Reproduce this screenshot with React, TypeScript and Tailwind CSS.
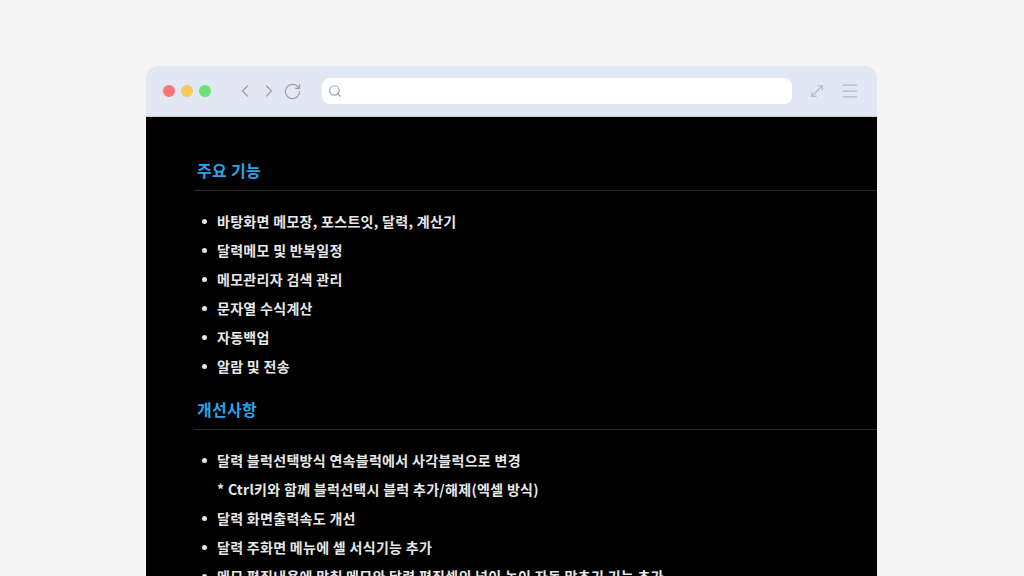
import { ChevronLeft, ChevronRight, RotateCw, Search, MoveDiagonal, Menu } from 'lucide-react';

const features = ['바탕화면 메모장, 포스트잇, 달력, 계산기', '달력메모 및 반복일정', '메모관리자 검색 관리', '문자열 수식계산', '자동백업', '알람 및 전송'];

function Bullet({ children, plain }: { children: React.ReactNode; plain?: boolean }) {
    return (
        <li className="flex items-center h-[29px]">
            <span className="w-[20px] shrink-0 flex justify-start pl-[5px]">
                {!plain && <span className="w-[5px] h-[5px] rounded-full bg-gray-200" />}
            </span>
            <span>{children}</span>
        </li>
    );
}

export default function App() {
    return (
        <div className="w-[1024px] h-[576px] bg-[#f5f5f5] overflow-hidden pt-[66px] pl-[146px]" style={{ fontFamily: '"Noto Sans CJK KR", "Noto Sans", sans-serif' }}>
            <div className="w-[731px] h-[600px] rounded-t-[12px] overflow-hidden flex flex-col">
                {/* Toolbar */}
                <div className="h-[51px] bg-[#e2e8f3] flex items-center px-[17px] border-b border-[#c9ccd3]">
                    <div className="flex gap-[6px]">
                        <span className="w-[12px] h-[12px] rounded-full bg-[#fb7476]" />
                        <span className="w-[12px] h-[12px] rounded-full bg-[#fdc85a]" />
                        <span className="w-[12px] h-[12px] rounded-full bg-[#6be277]" />
                    </div>
                    <div className="flex items-center gap-[4px] ml-[24px] text-[#9aa0ab]">
                        <ChevronLeft className="w-[20px] h-[20px]" strokeWidth={1.5} />
                        <ChevronRight className="w-[20px] h-[20px]" strokeWidth={1.5} />
                        <RotateCw className="w-[19px] h-[19px]" strokeWidth={1.5} />
                    </div>
                    <div className="ml-[20px] w-[470px] h-[26px] bg-white rounded-[8px] flex items-center px-[6px] text-[#9aa0ab]">
                        <Search className="w-[14px] h-[14px]" strokeWidth={2} />
                    </div>
                    <div className="ml-auto flex items-center gap-[14px] text-[#b3b8c2]">
                        <MoveDiagonal className="w-[18px] h-[18px]" strokeWidth={1.5} />
                        <Menu className="w-[20px] h-[20px]" strokeWidth={1.5} />
                    </div>
                </div>
                {/* Content */}
                <div className="flex-1 bg-black pl-[48px] pt-[40px] text-[14px] font-bold text-[#e8e8e8] tracking-[0.3px]">
                    <h2 className="text-[#2aa6e6] text-[16px] font-bold pl-[3px] h-[26px] leading-[26px]">주요 기능</h2>
                    <div className="border-b border-[#2a2a2a] mt-[7px]" />
                    <ul className="mt-[16px] pl-[3px]">
                        {features.map(f => <Bullet key={f}>{f}</Bullet>)}
                    </ul>
                    <h2 className="text-[#2aa6e6] text-[16px] font-bold pl-[3px] mt-[15px] h-[26px] leading-[26px]">개선사항</h2>
                    <div className="border-b border-[#2a2a2a] mt-[7px]" />
                    <ul className="mt-[16px] pl-[3px]">
                        <Bullet>달력 블럭선택방식 연속블럭에서 사각블럭으로 변경</Bullet>
                        <Bullet plain>* Ctrl키와 함께 블럭선택시 블럭 추가/해제(엑셀 방식)</Bullet>
                        <Bullet>달력 화면출력속도 개선</Bullet>
                        <Bullet>달력 주화면 메뉴에 셀 서식기능 추가</Bullet>
                        <Bullet>메모 편집내용에 맞춰 메모와 달력 편집셀의 넓이 높이 자동 맞추기 기능 추가</Bullet>
                    </ul>
                </div>
            </div>
        </div>
    );
}
